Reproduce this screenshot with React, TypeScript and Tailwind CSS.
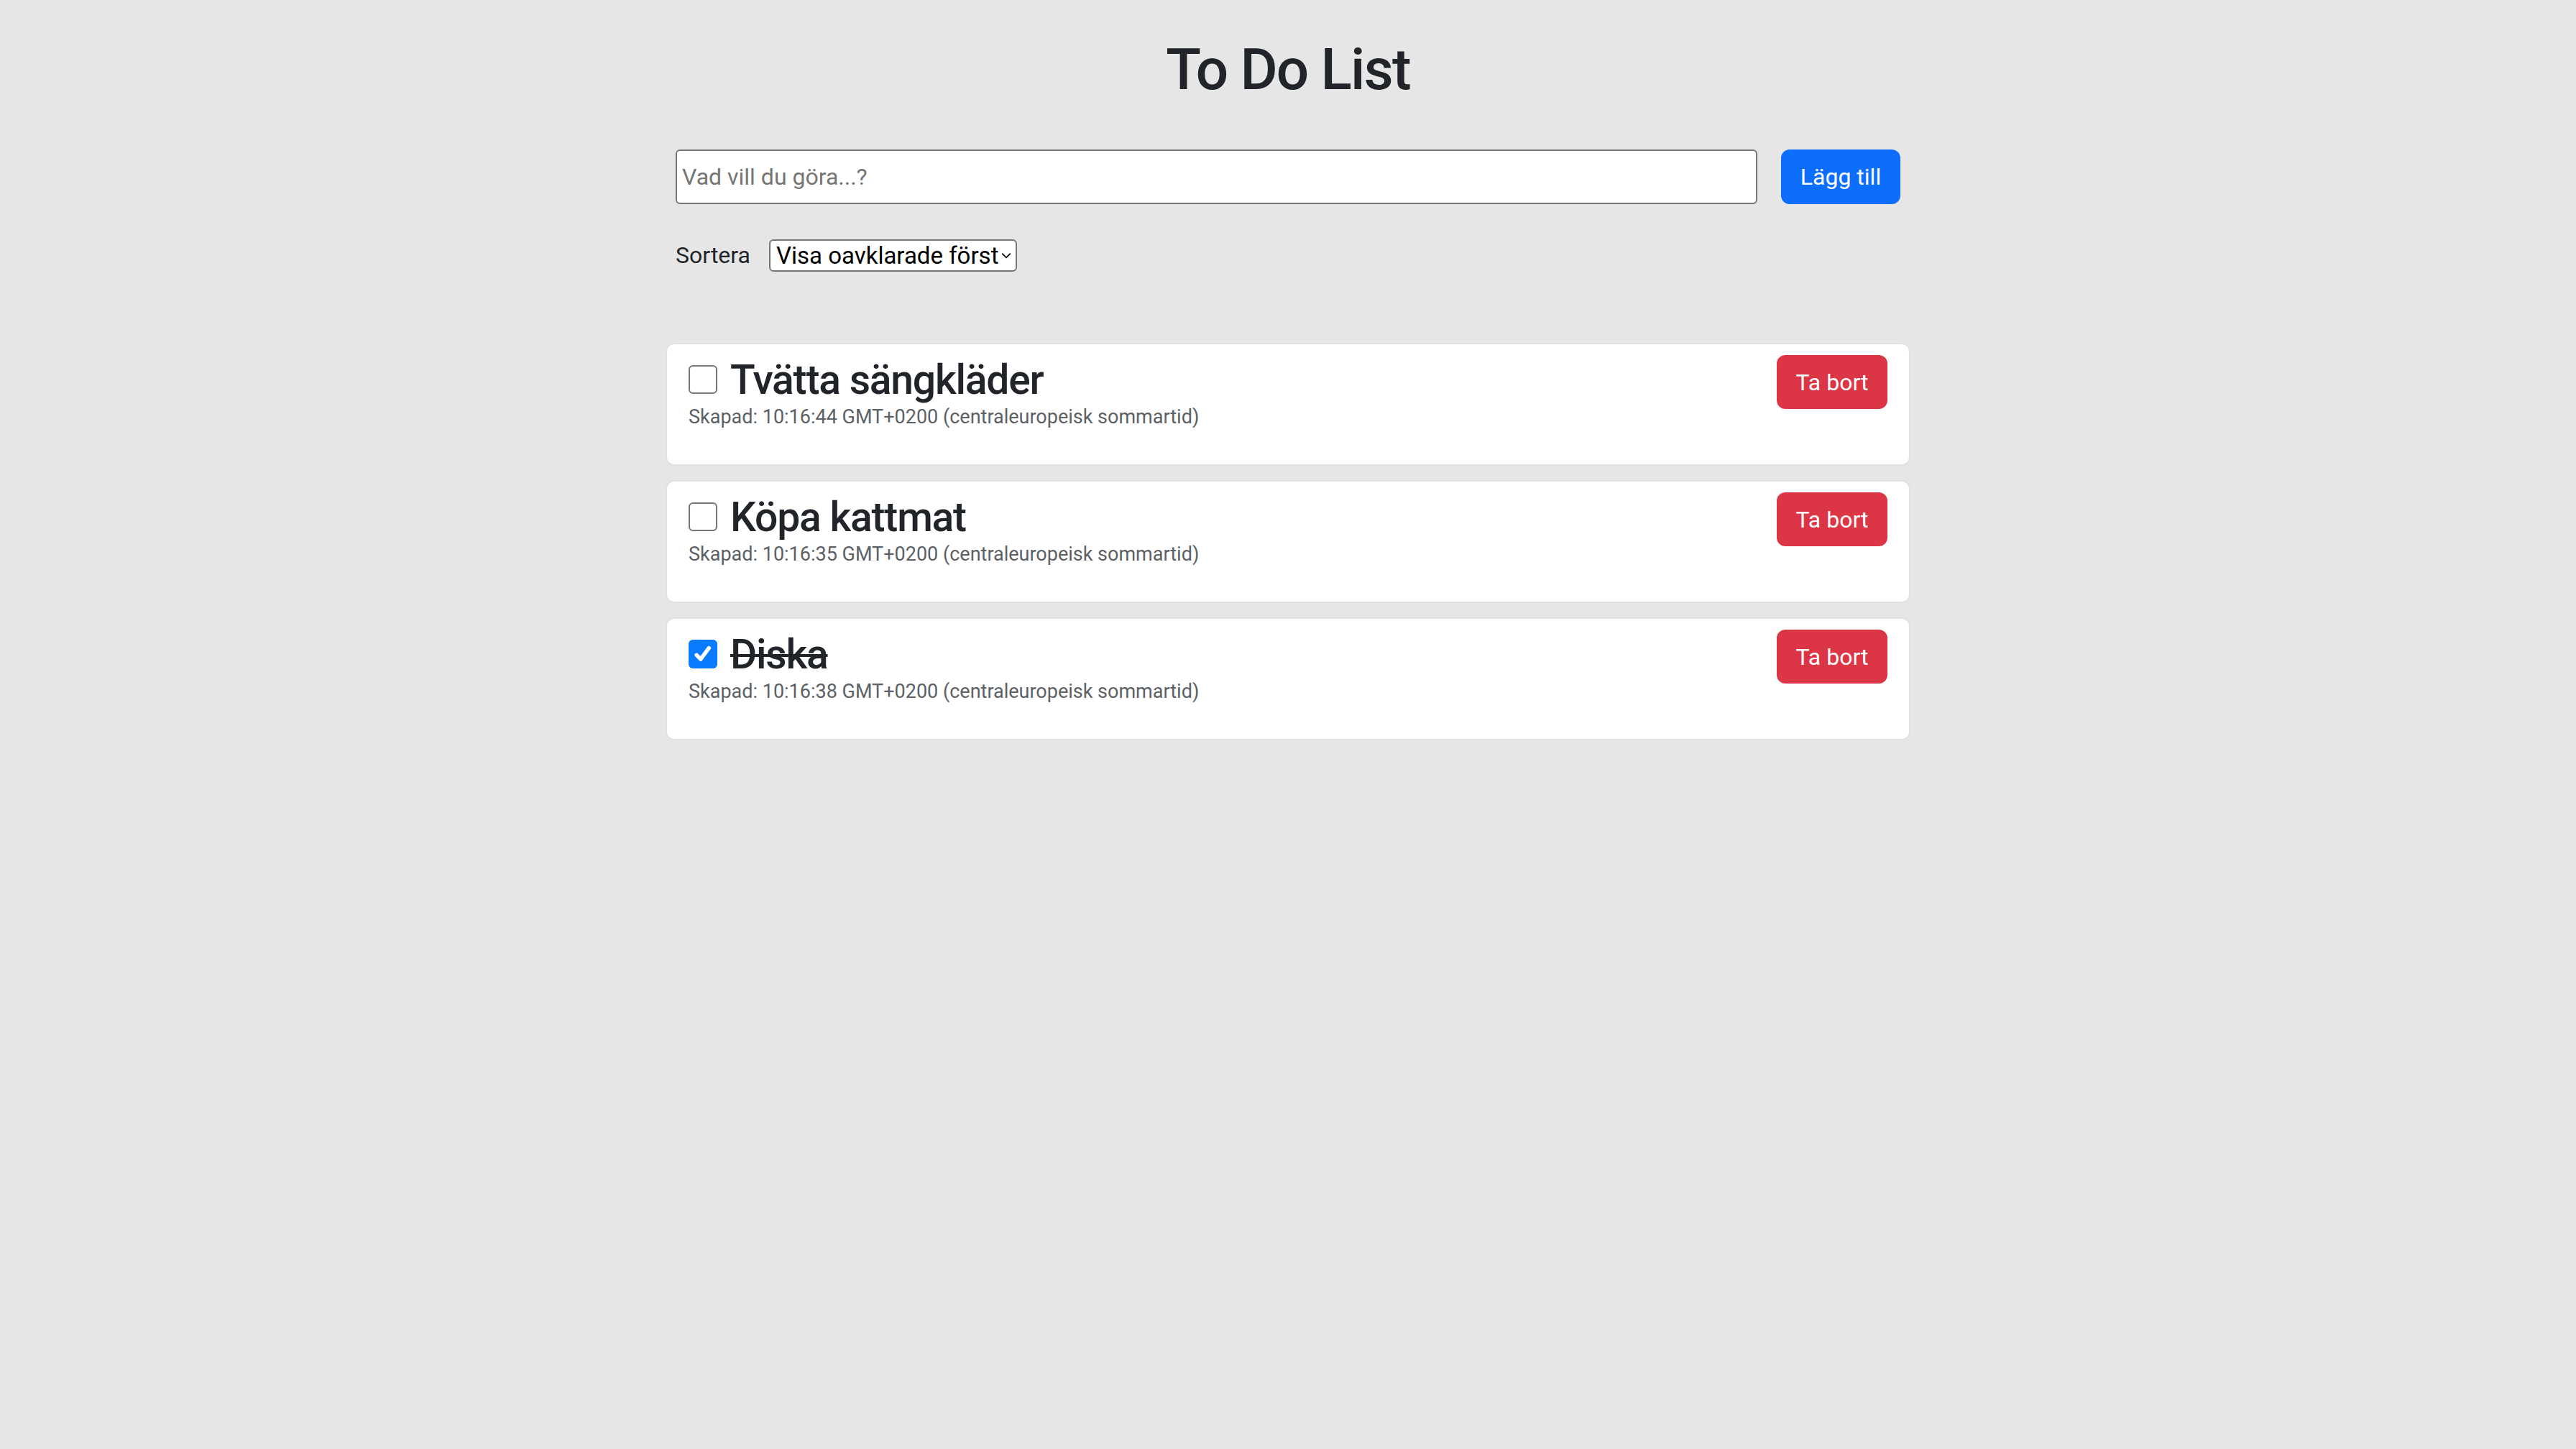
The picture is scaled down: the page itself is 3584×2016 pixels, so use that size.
import React from "react";

type Todo = {
  id: number;
  title: string;
  time: string;
  done: boolean;
};

const todos: Todo[] = [
  { id: 1, title: "Tvätta sängkläder", time: "10:16:44", done: false },
  { id: 2, title: "Köpa kattmat", time: "10:16:35", done: false },
  { id: 3, title: "Diska", time: "10:16:38", done: true },
];

function Checkbox({ checked }: { checked: boolean }) {
  if (checked) {
    return (
      <span className="flex h-[40px] w-[40px] shrink-0 items-center justify-center rounded-[6px] bg-[#0a7aff]">
        <svg viewBox="0 0 20 20" className="h-[32px] w-[32px]">
          <path d="M4.5 10.8l3.5 3.7L15.2 4.8" fill="none" stroke="#fff" strokeWidth="3.4" strokeLinecap="round" strokeLinejoin="round" />
        </svg>
      </span>
    );
  }
  return <span className="block h-[40px] w-[40px] shrink-0 rounded-[6px] border-2 border-[#767676] bg-white" />;
}

function TodoCard({ todo }: { todo: Todo }) {
  return (
    <div className="flex justify-between rounded-[12px] border-2 border-[#e0e3e6] bg-white pb-[49px] pl-[30px] pr-[30px] pt-[15px]">
      <div className="flex flex-col">
        <div className="flex h-[70px] items-start gap-[18px]">
          <span className="mt-[14px]">
            <Checkbox checked={todo.done} />
          </span>
          <span
            className={
              "whitespace-nowrap text-[57px] font-medium leading-[70px] tracking-[-1.2px] text-[#212529] " +
              (todo.done ? "line-through decoration-[4px]" : "")
            }
          >
            {todo.title}
          </span>
        </div>
        <p className="whitespace-nowrap text-[27px] leading-[33px] text-[#5c6166]">
          Skapad: {todo.time} GMT+0200 (centraleuropeisk sommartid)
        </p>
      </div>
      <button className="h-[75px] w-[154px] rounded-[12px] bg-[#dc3545] text-[32px] text-white">Ta bort</button>
    </div>
  );
}

export default function App() {
  return (
    <div className="min-h-screen bg-[#e6e6e6] font-['Roboto','Inter',sans-serif] text-[#212529]">
      <div className="mx-auto w-[1732px] pt-[49px]">
        <h1 className="text-center text-[80px] font-medium leading-[96px] tracking-[-1.8px]">To Do List</h1>

        <div className="mx-[14px] mt-[63px] flex gap-[33px]">
          <input
            className="h-[76px] flex-1 rounded-[6px] border-2 border-[#767676] bg-white px-[7px] text-[32px] outline-none placeholder:text-[#757575]"
            placeholder="Vad vill du göra...?"
          />
          <button className="h-[76px] w-[166px] rounded-[12px] bg-[#0d6efd] text-[32px] text-white">Lägg till</button>
        </div>

        <div className="mx-[14px] mt-[49px] flex items-center gap-[26px]">
          <span className="text-[32px] leading-[45px]">Sortera</span>
          <div className="flex h-[45px] w-[345px] items-center justify-between rounded-[6px] border-2 border-[#767676] bg-white pl-[8px] pr-[6px]">
            <span className="whitespace-nowrap text-[33px] leading-[41px] text-black">Visa oavklarade först</span>
            <svg viewBox="0 0 12 8" className="h-[10px] w-[14px] shrink-0">
              <path d="M1.5 1.5L6 6l4.5-4.5" fill="none" stroke="#000" strokeWidth="1.4" strokeLinecap="round" strokeLinejoin="round" />
            </svg>
          </div>
        </div>

        <div className="mt-[99px] flex flex-col gap-[20px]">
          {todos.map((t) => (
            <TodoCard key={t.id} todo={t} />
          ))}
        </div>
      </div>
    </div>
  );
}
